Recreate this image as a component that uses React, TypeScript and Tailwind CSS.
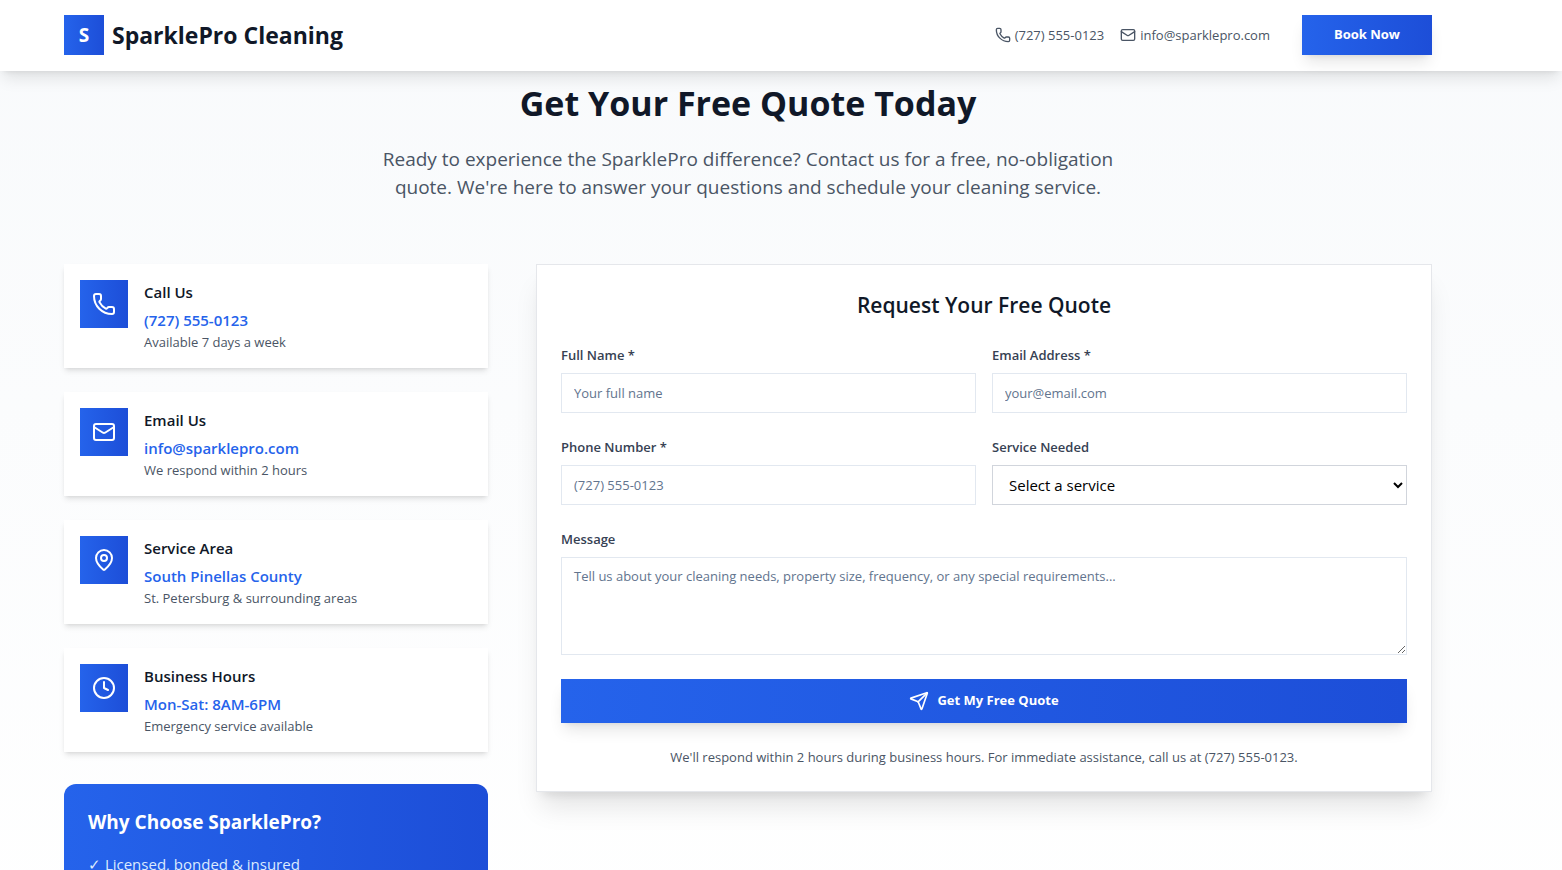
import React, { useState } from 'react';
import { Phone, Mail, MapPin, Clock, Send } from 'lucide-react';

const contactInfo = [
  {
    icon: Phone,
    title: 'Call Us',
    details: '(727) 555-0123',
    description: 'Available 7 days a week'
  },
  {
    icon: Mail,
    title: 'Email Us',
    details: 'info@sparklepro.com',
    description: 'We respond within 2 hours'
  },
  {
    icon: MapPin,
    title: 'Service Area',
    details: 'South Pinellas County',
    description: 'St. Petersburg & surrounding areas'
  },
  {
    icon: Clock,
    title: 'Business Hours',
    details: 'Mon-Sat: 8AM-6PM',
    description: 'Emergency service available'
  }
];

const labelClass = 'block mb-2 text-[13px] leading-5 font-semibold text-gray-700';
const inputClass =
  'block w-full h-10 px-3 text-[13px] bg-white border border-slate-200 text-slate-900 placeholder:text-slate-500';

const Header: React.FC = () => (
  <header className="sticky top-0 z-10 bg-white shadow-lg">
    <div className="max-w-[1400px] ml-12 mr-auto px-4 pt-[15px] pb-4 flex items-center justify-between">
      <div className="flex items-center gap-2">
        <div className="w-10 h-10 bg-linear-to-r from-[#2563eb] to-[#1d4ed8] flex items-center justify-center">
          <span className="text-white font-bold text-[19px]">S</span>
        </div>
        <span className="text-[23px] leading-8 font-bold text-gray-900">SparklePro Cleaning</span>
      </div>

      <div className="flex items-center gap-8">
        <div className="flex items-center gap-4 text-[13px] leading-5 text-gray-600">
          <a href="tel:7275550123" className="flex items-center gap-1">
            <Phone className="h-4 w-4" />
            (727) 555-0123
          </a>
          <a href="mailto:info@sparklepro.com" className="flex items-center gap-1">
            <Mail className="h-4 w-4" />
            info@sparklepro.com
          </a>
        </div>
        <button
          type="button"
          className="h-10 px-8 bg-linear-to-r from-[#2563eb] to-[#1d4ed8] text-white text-[13px] font-bold shadow-lg"
        >
          Book Now
        </button>
      </div>
    </div>
  </header>
);

const QuoteForm: React.FC = () => {
  const [formData, setFormData] = useState({
    name: '',
    email: '',
    phone: '',
    service: '',
    message: ''
  });

  const handleChange = (
    e: React.ChangeEvent<HTMLInputElement | HTMLTextAreaElement | HTMLSelectElement>
  ) => {
    setFormData({ ...formData, [e.target.name]: e.target.value });
  };

  return (
    <div className="bg-white border border-gray-200 shadow-xl p-6">
      <h3 className="mb-6 text-center text-[21px] leading-8 font-semibold text-gray-900">
        Request Your Free Quote
      </h3>
      <form className="space-y-6" onSubmit={(e) => e.preventDefault()}>
        <div className="grid md:grid-cols-2 gap-x-4 gap-y-6">
          <div>
            <label htmlFor="name" className={labelClass}>Full Name *</label>
            <input
              id="name"
              name="name"
              value={formData.name}
              onChange={handleChange}
              placeholder="Your full name"
              className={inputClass}
            />
          </div>
          <div>
            <label htmlFor="email" className={labelClass}>Email Address *</label>
            <input
              id="email"
              name="email"
              type="email"
              value={formData.email}
              onChange={handleChange}
              placeholder="your@email.com"
              className={inputClass}
            />
          </div>
          <div>
            <label htmlFor="phone" className={labelClass}>Phone Number *</label>
            <input
              id="phone"
              name="phone"
              type="tel"
              value={formData.phone}
              onChange={handleChange}
              placeholder="(727) 555-0123"
              className={inputClass}
            />
          </div>
          <div>
            <label htmlFor="service" className={labelClass}>Service Needed</label>
            <select
              id="service"
              name="service"
              value={formData.service}
              onChange={handleChange}
              className="block w-full h-10 px-3 text-[15px] bg-white border border-gray-300 text-black"
            >
              <option value="">Select a service</option>
            </select>
          </div>
        </div>

        <div>
          <label htmlFor="message" className={labelClass}>Message</label>
          <textarea
            id="message"
            name="message"
            rows={4}
            value={formData.message}
            onChange={handleChange}
            placeholder="Tell us about your cleaning needs, property size, frequency, or any special requirements..."
            className="block w-full px-3 py-2 text-[13px] leading-5 bg-white border border-slate-200 placeholder:text-slate-500"
          />
        </div>

        <button
          type="submit"
          className="w-full h-11 flex items-center justify-center gap-2 bg-linear-to-r from-[#2563eb] to-[#1d4ed8] text-white text-[13px] font-bold shadow-lg"
        >
          <Send className="h-5 w-5" />
          Get My Free Quote
        </button>

        <p className="text-center text-[13px] leading-5 text-gray-600">
          We'll respond within 2 hours during business hours. For immediate assistance, call us at (727) 555-0123.
        </p>
      </form>
    </div>
  );
};

const App: React.FC = () => {
  return (
    <div className="min-h-screen bg-linear-to-b from-slate-50 to-white font-['Open_Sans','Noto_Sans',sans-serif]">
      <Header />

      <section className="max-w-[1400px] ml-12 mr-auto px-4 pt-3 pb-20">
        <div className="text-center mb-[63px]">
          <h2 className="mb-[22px] text-[34px] leading-10 font-bold text-gray-900">
            Get Your Free Quote Today
          </h2>
          <p className="max-w-3xl mx-auto text-[19px] leading-7 text-gray-600">
            Ready to experience the SparklePro difference? Contact us for a free, no-obligation
            quote. We're here to answer your questions and schedule your cleaning service.
          </p>
        </div>

        <div className="grid lg:grid-cols-3 gap-12 items-start">
          {/* Contact Info */}
          <div>
            <div className="space-y-6">
              {contactInfo.map((info) => (
                <div key={info.title} className="bg-white shadow-md p-4 flex items-start gap-4">
                  <div className="w-12 h-12 shrink-0 bg-linear-to-r from-[#2563eb] to-[#1d4ed8] flex items-center justify-center">
                    <info.icon className="h-6 w-6 text-white" />
                  </div>
                  <div>
                    <h4 className="mb-1 text-[15px] leading-6 font-semibold text-gray-900">{info.title}</h4>
                    <p className="text-[15px] leading-6 font-semibold text-[#2563eb]">{info.details}</p>
                    <p className="text-[13px] leading-5 text-gray-600">{info.description}</p>
                  </div>
                </div>
              ))}
            </div>

            {/* Why Choose Us */}
            <div className="mt-8 p-6 rounded-xl bg-linear-to-r from-[#2563eb] to-[#1d4ed8] text-white">
              <h4 className="mb-4 text-[19px] leading-7 font-bold">Why Choose SparklePro?</h4>
              <ul className="text-[15px] leading-6 text-blue-100">
                <li>✓ Licensed, bonded &amp; insured</li>
              </ul>
            </div>
          </div>

          {/* Contact Form */}
          <div className="lg:col-span-2">
            <QuoteForm />
          </div>
        </div>
      </section>
    </div>
  );
};

export default App;
